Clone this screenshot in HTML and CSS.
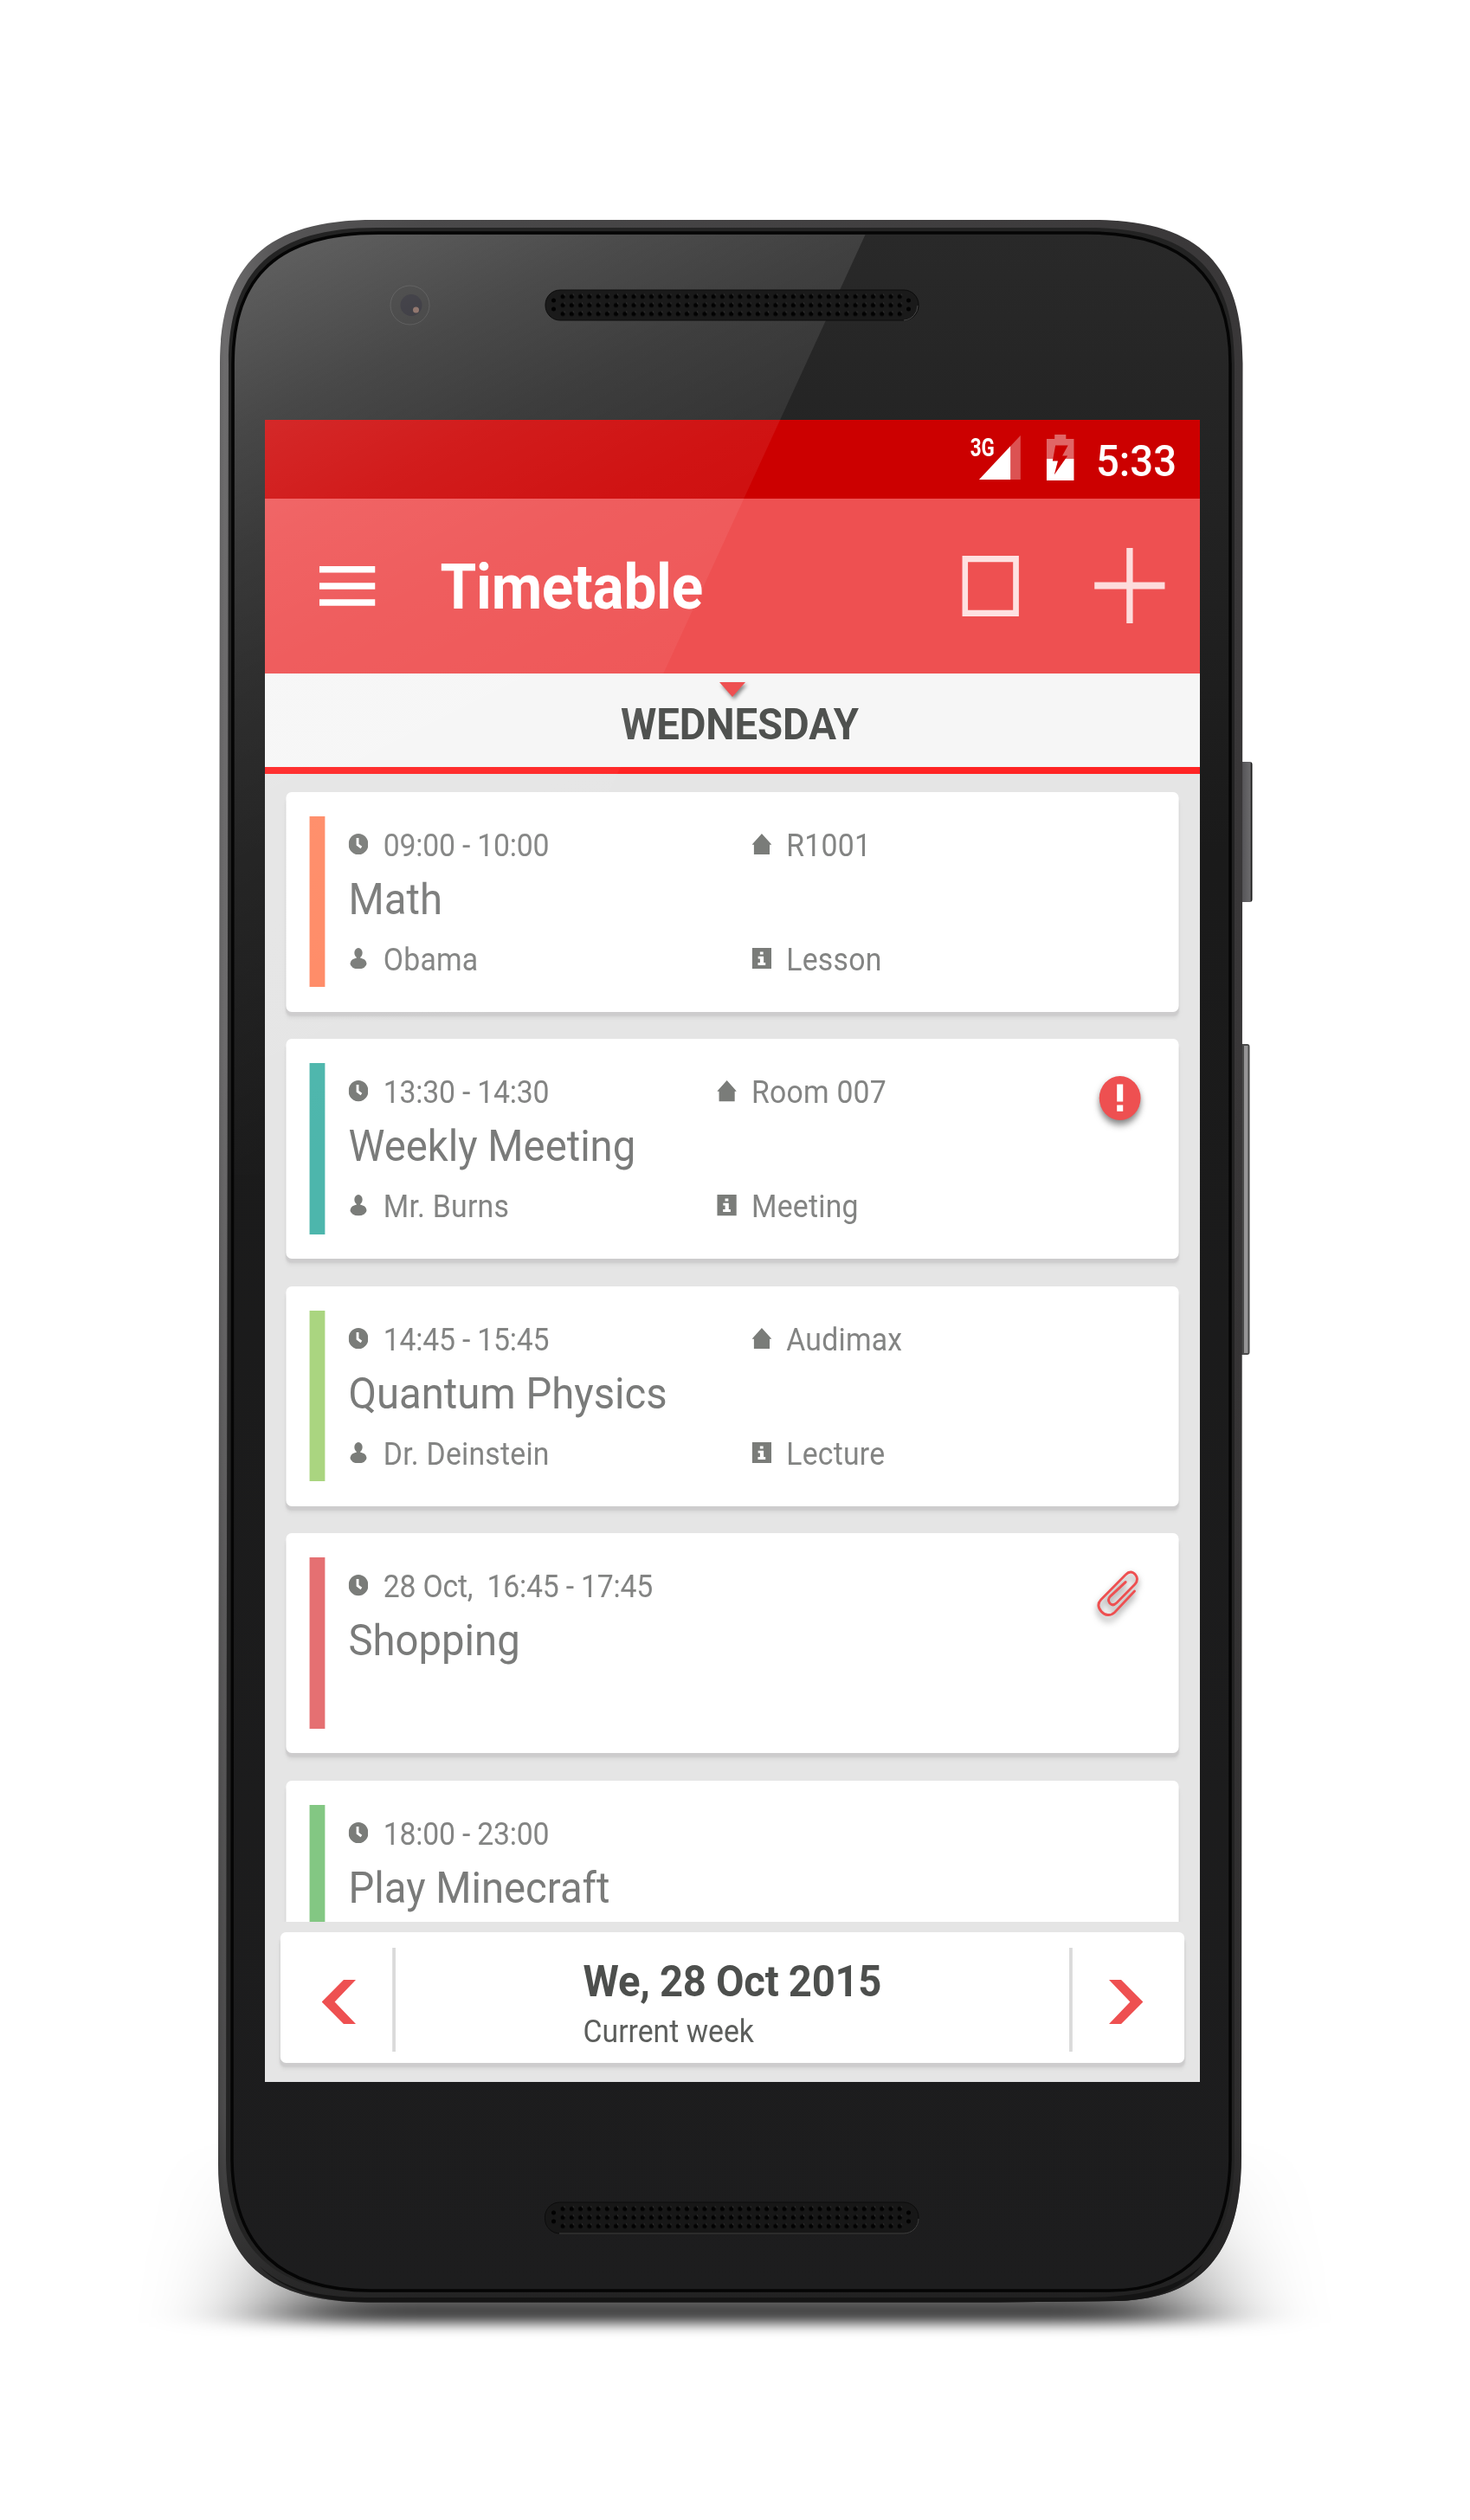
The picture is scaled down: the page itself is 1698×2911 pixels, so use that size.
FILE: index.html
```html
<!DOCTYPE html>
<html lang="en">
<head>
<meta charset="utf-8">
<title>Timetable</title>
<link rel="stylesheet" href="styles.css">
</head>
<body>
<svg width="0" height="0" class="sprite" aria-hidden="true">
  <symbol id="clock" viewBox="0 0 24 24"><circle cx="12" cy="12" r="12"/><path d="M11 5v7.6l4.6 3.2" fill="none" stroke="#fff" stroke-width="3"/></symbol>
  <symbol id="person" viewBox="0 0 24 24"><ellipse cx="12" cy="5.6" rx="4.9" ry="5.6"/><path d="M9.600 9h4.800v4h-4.800z"/><ellipse cx="12" cy="17.600" rx="10" ry="6.400"/></symbol>
  <symbol id="home" viewBox="0 0 24 24"><path d="M12 0 24 12.500h-2.500V24h-19V12.500H0z"/></symbol>
  <symbol id="info" viewBox="0 0 24 24"><path d="M0 0h24v24H0z"/><path d="M9.800 4.500h4v3h-4zM7.500 9.500h6.800v7.200h2.200v3H7.300v-3h2.600v-4.300H7.500z" fill="#fff"/></symbol>
</svg>
<main class="device">
  <svg class="layer" viewBox="0 0 1698 2911" aria-hidden="true">
    <defs>
      <linearGradient id="ground" x1="0" y1="2470" x2="0" y2="2684" gradientUnits="userSpaceOnUse">
        <stop offset="0" stop-opacity="0"/><stop offset=".5" stop-opacity=".2"/><stop offset=".85" stop-opacity=".55"/><stop offset="1" stop-opacity=".9"/>
      </linearGradient>
      <filter id="soft" x="-20%" y="-30%" width="140%" height="160%"><feGaussianBlur stdDeviation="68 8"/></filter>
      <linearGradient id="rim" x1="252" y1="0" x2="1436" y2="0" gradientUnits="userSpaceOnUse">
        <stop offset="0" stop-color="#605f60"/><stop offset=".006" stop-color="#6c6b6c"/><stop offset=".06" stop-color="#565556"/><stop offset=".2" stop-color="#4a494a"/><stop offset="1" stop-color="#393738"/>
      </linearGradient>
      <linearGradient id="rimShade" x1="0" y1="1200" x2="0" y2="2660" gradientUnits="userSpaceOnUse">
        <stop offset="0" stop-color="#222" stop-opacity="0"/><stop offset=".85" stop-color="#222" stop-opacity=".45"/><stop offset="1" stop-color="#1a1a1a" stop-opacity=".8"/>
      </linearGradient>
      <linearGradient id="glass" x1="0" y1="270" x2="0" y2="2650" gradientUnits="userSpaceOnUse">
        <stop offset="0" stop-color="#292929"/><stop offset=".3" stop-color="#1a1a1a"/><stop offset="1" stop-color="#1d1d1e"/>
      </linearGradient>
      <pattern id="holes" x="645" y="337.500" width="10.240" height="10" patternUnits="userSpaceOnUse"><circle cx="5.100" cy="5" r="2.600" fill="#020202"/><path d="M6.500 2.500l1.200 1" stroke="#555" stroke-width=".8"/></pattern>
      <linearGradient id="button" x1="1436" y1="0" x2="1447" y2="0" gradientUnits="userSpaceOnUse">
        <stop offset="0" stop-color="#58575a"/><stop offset=".75" stop-color="#6b6a6c"/><stop offset=".85" stop-color="#1c1c1c"/><stop offset="1" stop-color="#111"/>
      </linearGradient>
    </defs>
    <rect x="320" y="2470" width="1056" height="213" fill="url(#ground)" filter="url(#soft)"/>
    <rect x="1430" y="880" width="16.500" height="162" rx="3" fill="url(#button)"/>
    <rect x="1430" y="1206" width="13.500" height="359" rx="3" fill="#4a4a4a"/>
    <rect x="1437" y="1208" width="4.500" height="355" fill="#969596"/>
    <path d="M254 420C254 305 308 254 432 254H1262C1384 254 1435.500 305 1435.500 420L1434 2490C1434 2600 1390 2656 1290 2658L1150 2659.500H425C305 2659 252.500 2610 252 2500Z" fill="url(#rim)"/>
    <path d="M254 420C254 305 308 254 432 254H1262C1384 254 1435.500 305 1435.500 420L1434 2490C1434 2600 1390 2656 1290 2658L1150 2659.500H425C305 2659 252.500 2610 252 2500Z" fill="url(#rimShade)"/>
    <path d="M300 2618C335 2650 380 2654 430 2654H1250C1310 2654 1360 2645 1390 2615C1360 2652 1320 2657 1290 2658L1150 2659.500H425C370 2659 325 2645 300 2618Z" fill="#141414"/>
    <path d="M264 420C264 312 316 263 435 263H1258C1374 263 1426 312 1426 420V2495C1424 2592 1376 2648 1285 2648H425C320 2648 262 2600 261 2495Z" fill="#232323"/>
    <path d="M269 420C269 318 322 269 437 269H1256C1366 269 1421 318 1421 420V2495C1419 2590 1372 2646 1282 2646H428C325 2646 269 2596 268 2495Z" fill="url(#glass)" stroke="#050505" stroke-width="3.500"/>
    <circle cx="473.500" cy="352.500" r="22.500" fill="#202022" fill-opacity=".1" stroke="#555" stroke-opacity=".5"/>
    <circle cx="475" cy="352.500" r="12.500" fill="#191820"/>
    <circle cx="480.500" cy="358" r="3.500" fill="#7a5a50"/>
  </svg>

  <div class="screen">
    <div class="viewport">
      <div class="status">
        <svg class="signal" width="62" height="53" viewBox="0 0 62 53"><text x="0" y="24.500" textLength="30" lengthAdjust="spacingAndGlyphs">3G</text><path d="M11 52 62 1v51z" fill="#fff" fill-opacity=".32"/><path d="M11 52 49.500 13.500V52z" fill="#fff"/></svg>
        <svg class="battery" width="34" height="53" viewBox="0 0 34 53"><path d="M10 0h14v5h10v23H0V5h10z" fill="#fff" fill-opacity=".4"/><path d="M0 28h34v25H0z" fill="#fff"/><path d="M11 12.500H26.500L19.500 24.500H26L9.500 46.500 14 30.500H7.500z" fill="#c00"/></svg>
        <span class="time">5:33</span>
      </div>
      <header class="toolbar">
        <svg width="69" height="46" viewBox="0 0 69 46"><path d="M0 0h69v7.600H0zM0 19.200h69v7.600H0zM0 38.200h69v7.600H0z" fill="#fff"/></svg>
        <h1>Timetable</h1>
        <svg width="70" height="70" viewBox="0 0 70 70"><path d="M3.600 3.600h62.800v62.800H3.600z" fill="none" stroke="#fee1e1" stroke-width="7.200"/></svg>
        <svg width="87" height="87" viewBox="0 0 87 87"><path d="M43.500 0v87M0 43.500h87" stroke="#fddcdc" stroke-width="7.800"/></svg>
      </header>
      <div class="day">
        <svg class="marker" width="32" height="17" viewBox="0 0 32 17"><path d="M0 0h32L16 17z" fill="#ee5051"/></svg>
        <h2>WEDNESDAY</h2>
      </div>

      <section class="list">
        <article class="card">
          <i class="bar orange"></i>
          <div class="info">
            <p><svg><use href="#clock"/></svg>09:00 - 10:00</p>
            <p><svg><use href="#home"/></svg>R1001</p>
            <h3>Math</h3>
            <p><svg><use href="#person"/></svg>Obama</p>
            <p><svg><use href="#info"/></svg>Lesson</p>
          </div>
        </article>
        <article class="card">
          <i class="bar teal"></i>
          <div class="info narrow">
            <p><svg><use href="#clock"/></svg>13:30 - 14:30</p>
            <p><svg><use href="#home"/></svg>Room 007</p>
            <h3>Weekly Meeting</h3>
            <p><svg><use href="#person"/></svg>Mr. Burns</p>
            <p><svg><use href="#info"/></svg>Meeting</p>
          </div>
          <svg class="flag" width="51" height="51" viewBox="0 0 51 51"><circle cx="25.500" cy="25.500" r="25.500" fill="#ee5051"/><path d="M21.800 9.500h7.500v20h-7.500zM21.800 33.500h7.500v7.200h-7.500z" fill="#fff"/></svg>
        </article>
        <article class="card">
          <i class="bar lime"></i>
          <div class="info">
            <p><svg><use href="#clock"/></svg>14:45 - 15:45</p>
            <p><svg><use href="#home"/></svg>Audimax</p>
            <h3>Quantum Physics</h3>
            <p><svg><use href="#person"/></svg>Dr. Deinstein</p>
            <p><svg><use href="#info"/></svg>Lecture</p>
          </div>
        </article>
        <article class="card">
          <i class="bar red"></i>
          <div class="info">
            <p class="wide"><svg><use href="#clock"/></svg>28 Oct,&nbsp; 16:45 - 17:45</p>
            <h3>Shopping</h3>
          </div>
          <svg class="flag clip" width="52" height="53" viewBox="0 0 52 53"><path d="M46.500 24 22 48.500C17 53 10 52.500 5.500 47.500 1 42.500 1 38 5 34L35.500 5C39.500 1 44 1 47.500 5 51 9 49.800 13 47 16L24.500 37.500C21.500 40.300 18.500 40.500 16 38 13.500 35 14 32.500 16.500 30L35.500 13.500" fill="none" stroke="#ee5051" stroke-width="3" stroke-linecap="round"/></svg>
        </article>
        <article class="card">
          <i class="bar green"></i>
          <div class="info">
            <p class="wide"><svg><use href="#clock"/></svg>18:00 - 23:00</p>
            <h3>Play Minecraft</h3>
          </div>
        </article>
      </section>

      <footer class="pager">
        <svg class="prev" width="42" height="51" viewBox="0 0 42 51"><path d="M27 0h15L16 25.500 42 51H27L0 25.500z"/></svg>
        <div class="current">
          <div>
            <strong>We, 28 Oct 2015</strong>
            <span>Current week</span>
          </div>
        </div>
        <svg class="next" width="42" height="51" viewBox="0 0 42 51"><path d="M15 0H0l26 25.500L0 51h15l27-25.500z"/></svg>
      </footer>
    </div>
  </div>

  <svg class="layer overlay" viewBox="0 0 1698 2911" aria-hidden="true">
    <defs>
      <linearGradient id="glare" x1="330" y1="290" x2="760" y2="1150" gradientUnits="userSpaceOnUse">
        <stop offset="0" stop-color="#fff" stop-opacity=".25"/><stop offset=".17" stop-color="#fff" stop-opacity=".16"/><stop offset=".3" stop-color="#fff" stop-opacity=".11"/><stop offset=".44" stop-color="#fff" stop-opacity=".075"/><stop offset="1" stop-color="#fff" stop-opacity="0"/>
      </linearGradient>
    </defs>
    <path d="M271 420C271 319 323 271 437 271H999.500L500 1357H271Z" fill="url(#glare)"/>
    <rect x="630" y="335" width="431" height="35" rx="17" fill="#1a1a1a" stroke="#0c0c0c"/>
    <path id="perforation" d="M645 337.500h399.360v30H645z" fill="url(#holes)"/>
    <path d="M639.500 347v.1M639.500 357v.1M1049.500 347v.1M1049.500 357v.1" stroke="#020202" stroke-width="5" stroke-linecap="round"/>
    <path d="M1044 370a17 17 0 0 0 16-17" fill="none" stroke="#4a4a4a"/>
    <g transform="translate(0 2209)">
      <rect x="629.500" y="335" width="431.500" height="36" rx="17" fill="#171717" stroke="#0c0c0c"/>
      <use href="#perforation"/>
      <path d="M639.500 347v.1M639.500 357v.1M1049.500 347v.1M1049.500 357v.1" stroke="#020202" stroke-width="5" stroke-linecap="round"/>
      <path d="M646 371H1044a17 17 0 0 0 17-17" fill="none" stroke="#444"/>
    </g>
  </svg>
</main>
</body>
</html>
```

FILE: styles.css
```css
* { box-sizing: border-box; }
body { margin: 0; background: #fff; font-family: Roboto, "Liberation Sans", sans-serif; }
h1, h2, h3, p { margin: 0; font-weight: 400; }
svg { display: block; flex: none; }
.sprite { position: absolute; }

/* Phone body, screen and glare share one grid cell */
.device { display: grid; width: 1698px; height: 2911px; overflow: hidden; }
.device > * { grid-area: 1 / 1; }
.layer { width: 1698px; height: 2911px; }
.overlay { z-index: 2; }

.screen { width: 1080px; height: 1920px; margin: 485px 0 0 306px; overflow: hidden; background: #e5e5e5; }

/* The app is laid out 1152px wide and fitted to the panel */
.viewport {
  display: flex; flex-direction: column;
  width: 1152px; height: 1920px;
  transform: scaleX(.9375); transform-origin: 0 0;
  background: #e5e5e5;
}

.status {
  display: flex; align-items: flex-start; flex: none;
  height: 91px; padding: 17px 28px 0 869px;
  background: #c00; color: #fff;
}
.signal { overflow: visible; }
.signal text { fill: #fff; font-size: 29px; font-weight: 700; }
.battery { margin-left: 32px; }
.time { margin-left: 27px; padding-top: 1px; font-size: 50.4px; font-weight: 500; line-height: 60px; white-space: nowrap; }

.toolbar {
  display: flex; align-items: center; flex: none;
  height: 201.5px; padding: 0 43px 0 66.500px;
  background: #ee5051; color: #fff;
}
.toolbar h1 { flex: 1; margin-left: 80.500px; padding-top: 5px; font-size: 72px; font-weight: 700; letter-spacing: -.3px; line-height: 84px; }
.toolbar svg:last-child { margin-left: 93px; }

.day {
  display: flex; flex-direction: column; align-items: center; flex: none;
  height: 116px; padding-top: 10.500px;
  background: #f6f6f6; border-bottom: 8px solid #ff2424;
}
.marker { filter: drop-shadow(2px 3px 2px rgba(0, 0, 0, .45)); }
.day h2 { margin: 2px 0 0 18px; color: #4f514f; font-size: 50.4px; font-weight: 700; letter-spacing: -.1px; line-height: 60px; }

.list {
  display: flex; flex-direction: column; gap: 31.200px;
  height: 1326.500px; padding: 21.200px 26px 0 26.400px; overflow: hidden;
}
.card {
  display: flex; align-items: flex-start; flex: none;
  height: 254.300px; padding: 28.300px 47px 0 28.600px;
  border-radius: 7px; background: #fff;
  box-shadow: 0 5px 2px #cdcccd, 0 8px 4px #dbdbdb;
}
.bar { width: 19.400px; height: 197.400px; }
.orange { background: #ff8a65; }
.teal { background: #4db6ac; }
.lime { background: #aad580; }
.red { background: #e57072; }
.green { background: #83c783; }

.info {
  display: grid; flex: 1;
  grid-template-columns: 496.600px 1fr; grid-template-rows: 42px 82px 42px;
  margin-left: 28.600px; padding-top: 13px; color: #7a7b7a;
}
.info.narrow { grid-template-columns: 453.600px 1fr; }
.info p { display: flex; align-items: center; color: #838483; font-size: 36px; letter-spacing: .25px; line-height: 42px; white-space: nowrap; }
.info p:first-child { letter-spacing: -.22px; }
.info p svg { width: 24.400px; height: 24.400px; margin: 0 18.500px 4px 0; fill: #7a7c79; }
.info h3, .info .wide { grid-column: 1 / -1; }
.info h3 { font-size: 50.4px; line-height: 82px; }
.info h3 ~ p { padding-top: 8px; height: 50px; }
.flag { margin-top: 15px; overflow: visible; filter: drop-shadow(0 5px 4px rgba(0, 0, 0, .5)); }
.clip { margin-right: 2px; }

.pager {
  display: flex; align-items: center; flex: none;
  height: 151px; margin: 12.300px 19.300px 0 19px; padding: 0 51px;
  border-radius: 7px; background: #fff; fill: #ee5051;
  box-shadow: 0 5px 2px #cdcccd, 0 8px 4px #dbdbdb;
}
.pager svg { margin-top: 9px; }
.current {
  display: flex; flex: 1; justify-content: center;
  height: 120px; margin: 4px 45px 0 45px;
  border: solid #dadada; border-width: 0 4.500px;
}
.current div { display: flex; flex-direction: column; padding-top: 9.500px; }
.current strong { color: #4d4f4d; font-size: 50.4px; font-weight: 700; letter-spacing: -.3px; line-height: 60px; white-space: nowrap; }
.current span { color: #5c5e5c; font-size: 36px; line-height: 57px; }
```
